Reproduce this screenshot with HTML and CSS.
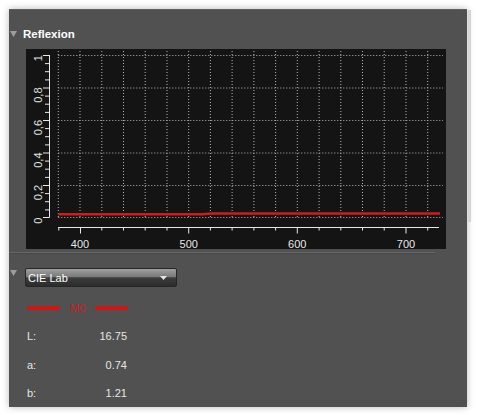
FILE: index.html
```html
<!DOCTYPE html>
<html>
<head>
<meta charset="utf-8">
<link rel="stylesheet" href="styles.css">
</head>
<body>
<div class="window">
  <div class="edge-strip"></div>
  <div class="section-head">
    <svg class="tri" width="7" height="6" viewBox="0 0 7 6"><path d="M0 0 L7 0 L3.5 6 Z"/></svg>
    <span class="title">Reflexion</span>
  </div>
  <svg class="chart" width="420" height="200" viewBox="0 0 420 200">
    <rect width="420" height="200" fill="#141414"/>
    <g class="grid">
      <path d="M32.3 6.5H417 M32.3 39H417 M32.3 71.5H417 M32.3 104H417 M32.3 136.5H417 M32.3 168.5H417"/>
      <path d="M32.3 2V168.5 M54 2V168.5 M75.8 2V168.5 M97.5 2V168.5 M119.2 2V168.5 M141 2V168.5 M162.7 2V168.5 M184.4 2V168.5 M206.1 2V168.5 M227.9 2V168.5 M249.6 2V168.5 M271.3 2V168.5 M293.1 2V168.5 M314.8 2V168.5 M336.5 2V168.5 M358.2 2V168.5 M380 2V168.5 M401.7 2V168.5"/>
    </g>
    <g class="axis">
      <path d="M23.5 6V168.5"/>
      <path d="M17 6.5H23.5 M19 14.6H23.5 M19 22.7H23.5 M19 30.9H23.5 M17 39H23.5 M19 47.1H23.5 M19 55.2H23.5 M19 63.4H23.5 M17 71.5H23.5 M19 79.6H23.5 M19 87.7H23.5 M19 95.9H23.5 M17 104H23.5 M19 112.1H23.5 M19 120.2H23.5 M19 128.4H23.5 M17 136.5H23.5 M19 144.6H23.5 M19 152.7H23.5 M19 160.9H23.5 M17 168.5H23.5"/>
      <path d="M32.3 178.5H413"/>
      <path d="M32.8 178V181.5 M54.5 178V184.5 M75.8 178V181.5 M97.5 178V181.5 M119.2 178V181.5 M141 178V181.5 M162.7 178V184.5 M184.4 178V181.5 M206.1 178V181.5 M227.9 178V181.5 M249.6 178V181.5 M271.3 178V184.5 M293.1 178V181.5 M314.8 178V181.5 M336.5 178V181.5 M358.2 178V181.5 M380 178V184.5 M401.7 178V181.5"/>
    </g>
    <g class="ylabels">
      <text transform="translate(15.5 6) rotate(-90)">1</text>
      <text transform="translate(15.5 38.5) rotate(-90)">0,8</text>
      <text transform="translate(15.5 71) rotate(-90)">0,6</text>
      <text transform="translate(15.5 103.5) rotate(-90)">0,4</text>
      <text transform="translate(15.5 136) rotate(-90)">0,2</text>
      <text transform="translate(15.5 168.5) rotate(-90)">0</text>
    </g>
    <g class="xlabels">
      <text x="54" y="198.5">400</text>
      <text x="162.7" y="198.5">500</text>
      <text x="271.3" y="198.5">600</text>
      <text x="380" y="198.5">700</text>
    </g>
    <path class="curve" d="M32.3 165.3 L176 165.3 L186 164.5 L414 164.5"/>
  </svg>
  <div class="separator"></div>
  <div class="select-row">
    <svg class="tri tri-low" width="7" height="6" viewBox="0 0 7 6"><path d="M0 0 L7 0 L3.5 6 Z"/></svg>
    <div class="dropdown">
      <span>CIE Lab</span>
      <svg class="arrow" width="7" height="4" viewBox="0 0 7 4"><path d="M0 0 L7 0 L3.5 4 Z"/></svg>
    </div>
  </div>
  <div class="legend">
    <span class="bar"></span>
    <span class="legend-text">M0</span>
    <span class="bar"></span>
  </div>
  <div class="values">
    <span class="key">L:</span><span class="val">16.75</span>
    <span class="key">a:</span><span class="val">0.74</span>
    <span class="key">b:</span><span class="val">1.21</span>
  </div>
</div>
</body>
</html>
```
FILE: styles.css
```css
html, body {
  margin: 0;
  padding: 0;
}
body {
  background: #ffffff;
  width: 477px;
  height: 415px;
  overflow: hidden;
  font-family: "Liberation Sans", Arial, sans-serif;
}
.window {
  position: relative;
  margin: 9px 0 0 9px;
  width: 458px;
  height: 398px;
  box-sizing: border-box;
  background: #515151;
  border-top: 1px solid #5f5f5f;
  box-shadow: 0 0 7px rgba(0, 0, 0, 0.28);
}
.edge-strip {
  position: absolute;
  left: 459px;
  top: 0;
  width: 3px;
  height: 212px;
  background: #d6d6d6;
}
.section-head {
  display: flex;
  align-items: center;
  padding-top: 17px;
  height: 14px;
}
.tri {
  display: block;
  margin-left: 1px;
  fill: #9c9c9c;
}
.title {
  margin-left: 6px;
  color: #ffffff;
  font-weight: bold;
  font-size: 11.5px;
  line-height: 14px;
}
.chart {
  display: block;
  margin: 8px 0 0 17px;
}
.grid path {
  fill: none;
  stroke: #b8b8b8;
  stroke-width: 1;
  stroke-dasharray: 1 2;
}
.axis path {
  fill: none;
  stroke: #e8e8e8;
  stroke-width: 1;
}
.ylabels text {
  fill: #e0e0e0;
  font-family: "Liberation Sans", Arial, sans-serif;
  font-size: 11px;
  text-anchor: end;
}
.xlabels text {
  fill: #e8e8e8;
  font-family: "Liberation Sans", Arial, sans-serif;
  font-size: 11px;
  text-anchor: middle;
}
.curve {
  fill: none;
  stroke: #d21a1a;
  stroke-width: 2.6;
}
.separator {
  margin-top: 3px;
  width: 426px;
  height: 0;
  border-top: 1px solid #676767;
  border-bottom: 1px solid #474747;
}
.select-row {
  display: flex;
  align-items: flex-start;
  margin-top: 14px;
}
.tri-low {
  margin-top: 2px;
}
.dropdown {
  display: flex;
  align-items: center;
  justify-content: space-between;
  margin-left: 8px;
  width: 152px;
  height: 19px;
  box-sizing: border-box;
  border: 1px solid #262626;
  border-radius: 2px;
  background: linear-gradient(#a0a0a0 0%, #7a7a7a 45%, #3c3c3c 52%, #2c2c2c 100%);
  color: #ffffff;
  font-size: 11px;
  line-height: 16px;
  padding-left: 2px;
}
.arrow {
  display: block;
  margin-right: 9px;
  fill: #e6e6e6;
}
.legend {
  display: flex;
  align-items: center;
  margin-top: 14px;
  padding-left: 18px;
  height: 14px;
}
.bar {
  display: block;
  width: 33px;
  height: 4px;
  border-radius: 2px;
  background: #d41414;
}
.legend-text {
  margin: 0 10px;
  color: #c81e1e;
  font-size: 11px;
  line-height: 14px;
}
.values {
  display: grid;
  grid-template-columns: 30px 70px;
  grid-auto-rows: 14px;
  row-gap: 14.5px;
  margin-top: 14.4px;
  padding-left: 18px;
  color: #e6e6e6;
  font-size: 11px;
  line-height: 14px;
}
.val {
  text-align: right;
}
```
